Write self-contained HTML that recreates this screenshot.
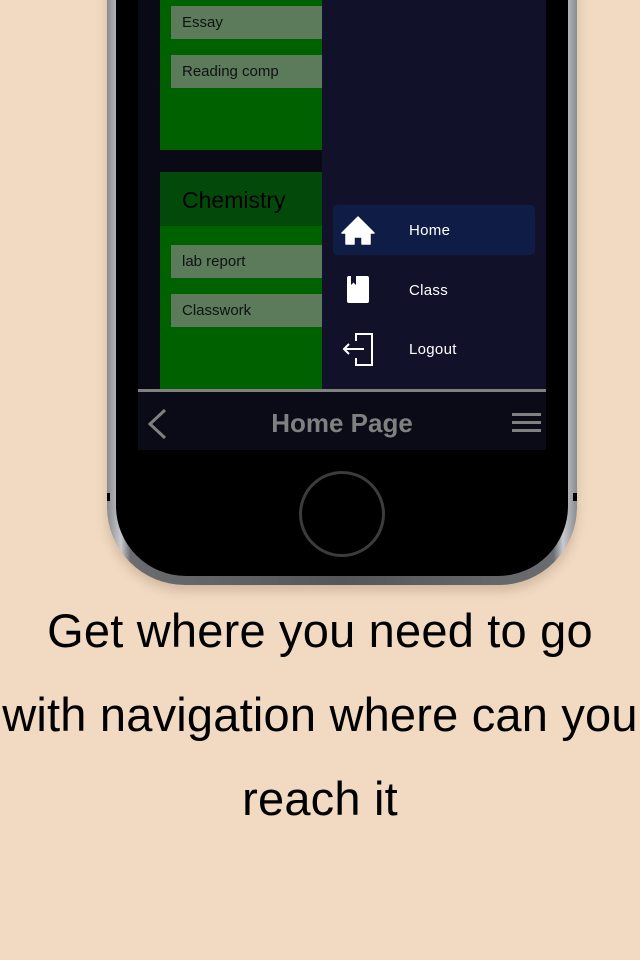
<!DOCTYPE html>
<html><head><meta charset="utf-8"><style>
*{margin:0;padding:0;box-sizing:border-box}
body{width:640px;height:960px;background:#f1d9c2;position:relative;overflow:hidden;font-family:"Liberation Sans",sans-serif}
.abs{position:absolute}
.phone{left:107px;top:-80px;width:470px;height:665px;border-radius:0 0 78px 78px;background:linear-gradient(90deg,#8a8b90,#c9cacd 3%,#6b6c70 5%,#55565a 50%,#6b6c70 95%,#c9cacd 97%,#8a8b90);box-shadow:0 6px 10px rgba(120,90,60,.25)}
.inner{left:116px;top:-80px;width:452px;height:656px;border-radius:0 0 70px 70px;background:#000}
.item{position:absolute;left:171px;width:151px;height:33px;background:#5b7b5b;color:#111;font-size:15px;padding-left:11px;line-height:33px}
.nav{position:absolute;left:409px;color:#fff;font-size:15px;letter-spacing:.3px}
.cap{position:absolute;left:-20px;width:680px;text-align:center;font-size:47px;color:#000;white-space:nowrap;letter-spacing:.2px}
</style></head><body>
<div class="abs phone"></div>
<div class="abs inner"></div>
<div class="abs" style="left:107px;top:493px;width:3px;height:8px;background:#000"></div>
<div class="abs" style="left:573px;top:493px;width:4px;height:8px;background:#000"></div>
<div class="abs" style="left:138px;top:0;width:184px;height:390px;background:#0a0a16"></div>
<div class="abs" style="left:160px;top:0;width:162px;height:150px;background:#006100"></div>
<div class="abs" style="left:160px;top:172px;width:162px;height:54px;background:#034a0a;font-size:23px;color:#000;padding:15px 0 0 22px">Chemistry</div>
<div class="abs" style="left:160px;top:226px;width:162px;height:164px;background:#006100"></div>
<div class="item" style="top:6px">Essay</div>
<div class="item" style="top:55px">Reading comp</div>
<div class="item" style="top:245px">lab report</div>
<div class="item" style="top:294px">Classwork</div>
<div class="abs" style="left:322px;top:0;width:224px;height:390px;background:#12112a"></div>
<div class="abs" style="left:333px;top:205px;width:202px;height:50px;background:#0f1c45;border-radius:4px"></div>
<svg class="abs" style="left:340px;top:214px" width="36" height="34" viewBox="0 0 36 34"><path d="M18 3 L34 19 H30 V30 H22 V23 H14 V30 H6 V19 H2 Z" fill="#fff" stroke="#fff" stroke-width="1.5" stroke-linejoin="round"/></svg>
<svg class="abs" style="left:346px;top:275px" width="24" height="30" viewBox="0 0 24 30"><rect x="1" y="1" width="22" height="27" rx="2" fill="#fff"/><path d="M5 1 V10 L7.5 7.5 L10 10 V1 Z" fill="#12112a"/></svg>
<svg class="abs" style="left:340px;top:331px" width="36" height="36" viewBox="0 0 36 36" fill="none" stroke="#fff" stroke-width="2"><path d="M16 10 V3 H32 V34 H16 V27"/><path d="M4 18 H24 M9 13 L4 18 L9 23"/></svg>
<div class="nav" style="top:222px">Home</div>
<div class="nav" style="top:282px">Class</div>
<div class="nav" style="top:341px">Logout</div>
<div class="abs" style="left:138px;top:389px;width:408px;height:3px;background:#808080"></div>
<div class="abs" style="left:138px;top:392px;width:408px;height:58px;background:#0b0b18"></div>
<svg class="abs" style="left:145px;top:408px" width="26" height="32" viewBox="0 0 26 32"><path d="M20 2 L5 16 L20 30" stroke="#808080" stroke-width="3" fill="none"/></svg>
<div class="abs" style="left:138px;top:408px;width:408px;text-align:center;color:#808080;font-size:26px;font-weight:bold">Home Page</div>
<div class="abs" style="left:512px;top:413px;width:29px;height:3px;background:#808080;box-shadow:0 8px 0 #808080,0 16px 0 #808080"></div>
<div class="abs" style="left:299px;top:471px;width:86px;height:86px;border-radius:50%;border:3px solid #3c3c3e"></div>
<div class="cap" style="top:603px">Get where you need to go</div>
<div class="cap" style="top:687px">with navigation where can you</div>
<div class="cap" style="top:771px">reach it</div>
</body></html>
